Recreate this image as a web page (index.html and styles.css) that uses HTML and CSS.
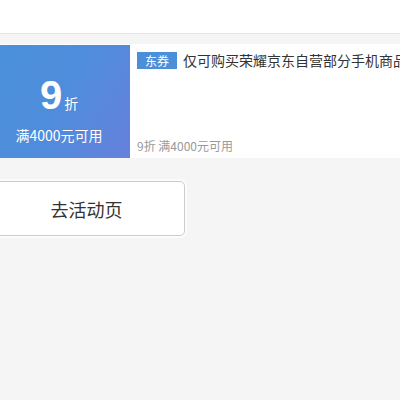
FILE: index.html
```html
<!DOCTYPE html>
<html>
<head>
<meta charset="utf-8">
<link rel="stylesheet" href="styles.css">
</head>
<body>
<div class="topbar"></div>
<div class="page">
  <div class="coupon">
    <div class="left">
      <div class="rate"><span class="num">9</span><span class="unit">折</span></div>
      <div class="cond">满4000元可用</div>
    </div>
    <div class="right">
      <div class="title"><span class="tag">东券</span><span class="desc">仅可购买荣耀京东自营部分手机商品</span></div>
      <div class="sub">9折 满4000元可用</div>
    </div>
  </div>
  <div class="btnrow">
    <div class="btn">去活动页</div>
  </div>
</div>
</body>
</html>
```
FILE: styles.css
```css
html, body {
  margin: 0;
  padding: 0;
  background: #f5f5f5;
  font-family: "Noto Sans CJK SC", "Liberation Sans", sans-serif;
  overflow: hidden;
  width: 400px;
  height: 400px;
}
.topbar {
  height: 33px;
  background: #ffffff;
  border-bottom: 1px solid #e4e4e4;
}
.page {
  margin-left: -12px;
  padding-top: 10px;
  width: 440px;
}
.coupon {
  display: flex;
  height: 114px;
  background: #ffffff;
}
.left {
  width: 142px;
  margin-top: 1px;
  background: linear-gradient(120deg, #4990da 0%, #4f8ddb 50%, #6580dc 100%);
  color: #ffffff;
  display: flex;
  flex-direction: column;
  align-items: center;
}
.rate {
  margin-top: 30px;
  height: 40px;
  display: flex;
  align-items: baseline;
}
.num {
  font-family: "Liberation Sans", sans-serif;
  font-weight: bold;
  font-size: 40px;
  line-height: 40px;
}
.unit {
  font-size: 14px;
  margin-left: 2px;
}
.cond {
  margin-top: 10px;
  font-size: 14px;
  line-height: 20px;
}
.right {
  flex: 1;
  padding: 7px 0 0 7px;
  display: flex;
  flex-direction: column;
  overflow: hidden;
}
.title {
  display: flex;
  align-items: center;
  white-space: nowrap;
}
.tag {
  background: #4b8fd9;
  color: #ffffff;
  font-size: 12px;
  line-height: 17px;
  padding: 0 8px;
  margin-right: 6px;
}
.desc {
  font-size: 14px;
  color: #333333;
  line-height: 18px;
}
.sub {
  margin-top: auto;
  margin-bottom: 4px;
  font-size: 12px;
  color: #999999;
  line-height: 16px;
}
.btnrow {
  padding-top: 23px;
}
.btn {
  width: 197px;
  height: 55px;
  box-sizing: border-box;
  background: #ffffff;
  border: 1px solid #cccccc;
  border-radius: 5px;
  box-shadow: 0 0 0 2px #fbfbfb;
  display: flex;
  align-items: center;
  justify-content: center;
  font-size: 18px;
  color: #333333;
}
```
